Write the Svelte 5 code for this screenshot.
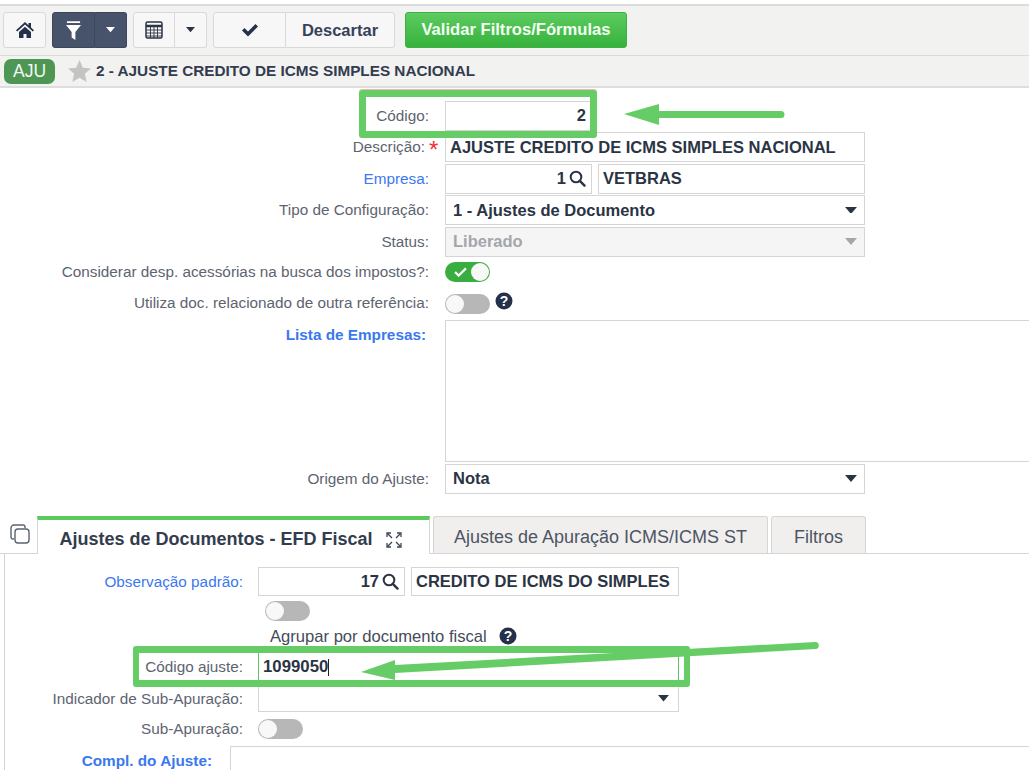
{#snippet search()}
	<svg class="lupa" viewBox="0 0 16 16" width="17" height="17"><circle cx="6.6" cy="6.6" r="5" fill="none" stroke="#2b3444" stroke-width="1.9" /><path d="M10.2 10.2 14.6 14.6" stroke="#2b3444" stroke-width="2.3" stroke-linecap="round" /></svg>
{/snippet}

{#snippet caret(color = '#2b3444', w = 12)}
	<svg class="caret" viewBox="0 0 12 7" width={w} height={w * 0.58}><path d="M0 0h12L6 7z" fill={color} /></svg>
{/snippet}

{#snippet help()}
	<svg class="help" viewBox="0 0 18 18" width="18" height="18"><circle cx="9" cy="9" r="8.5" fill="#25314a" /><text x="9" y="14" text-anchor="middle" class="help-q">?</text></svg>
{/snippet}

<div class="page">
	<header class="toolbar">
		<button class="btn home" aria-label="Início">
			<svg viewBox="0 0 18 16" width="18" height="16"><path d="M9 0 0 8.2l1.2 1.3L9 2.6l7.800 6.900L18 8.200 15 5.500V1h-2.500v2.300zM3 10v6h4.500v-4h3v4H15v-6L9 4.700z" fill="#25314a" /></svg>
		</button>
		<div class="group dark">
			<button class="btn main" aria-label="Filtro">
				<svg viewBox="0 0 16 20" width="15" height="19"><path d="M1 0h14v2H1zM0 4h16l-6 7.500V20l-4-2.500v-6z" fill="#fff" /></svg>
			</button>
			<button class="btn more" aria-label="Mais">{@render caret('#fff', 9)}</button>
		</div>
		<div class="group">
			<button class="btn main table" aria-label="Tabela">
				<svg viewBox="0 0 18 18" width="18" height="18"><rect x="1" y="1" width="16" height="16" rx="1.500" fill="none" stroke="#2b3444" stroke-width="1.500" /><path d="M1 5h16" stroke="#2b3444" stroke-width="2.500" /><path d="M1 9h16M1 12h16M1 15h16M5.500 6v11M9 6v11M12.500 6v11" stroke="#2b3444" stroke-width="0.900" /></svg>
			</button>
			<button class="btn more" aria-label="Mais">{@render caret('#2b3444', 9)}</button>
		</div>
		<div class="group">
			<button class="btn check" aria-label="Confirmar">
				<svg viewBox="0 0 18 14" width="18" height="14"><path d="M1 7.500 3.500 5l3.500 3.500L14.500 1 17 3.500 7 13.500z" fill="#25314a" /></svg>
			</button>
			<button class="btn text">Descartar</button>
		</div>
		<button class="btn validar">Validar Filtros/Fórmulas</button>
	</header>

	<div class="titlebar">
		<span class="badge">AJU</span>
		<svg class="star" viewBox="0 0 24 23" width="23" height="22"><path d="M12 0l3.500 8 8.500.800-6.400 5.700 1.900 8.500L12 18.500 4.500 23l1.900-8.500L0 8.800 8.500 8z" fill="#c4c4c4" /></svg>
		<span class="title">2 - AJUSTE CREDITO DE ICMS SIMPLES NACIONAL</span>
	</div>

	<section class="form">
		<label for="cod">Código:</label>
		<input id="cod" class="wide num" value="2" />

		<label for="desc">Descrição:<span class="req">*</span></label>
		<input id="desc" class="full" value="AJUSTE CREDITO DE ICMS SIMPLES NACIONAL" />

		<span class="lbl link">Empresa:</span>
		<div class="pair">
			<div class="field lookup"><b>1</b>{@render search()}</div>
			<div class="field name">VETBRAS</div>
		</div>

		<span class="lbl">Tipo de Configuração:</span>
		<div class="field select">1 - Ajustes de Documento {@render caret()}</div>

		<span class="lbl">Status:</span>
		<div class="field select disabled">Liberado {@render caret('#a3a6ab')}</div>

		<span class="lbl">Considerar desp. acessórias na busca dos impostos?:</span>
		<div class="toggle-row r1">
			<span class="switch on">
				<svg viewBox="0 0 14 11" width="13" height="10"><path d="M1 5.500 5 9.500 13 1.500" fill="none" stroke="#fff" stroke-width="2.400" /></svg>
				<i></i>
			</span>
		</div>

		<span class="lbl">Utiliza doc. relacionado de outra referência:</span>
		<div class="toggle-row r2">
			<span class="switch"><i></i></span>
			{@render help()}
		</div>

		<span class="lbl link strong top">Lista de Empresas:</span>
		<div class="listbox"></div>

		<span class="lbl">Origem do Ajuste:</span>
		<div class="field select">Nota {@render caret()}</div>
	</section>

	<nav class="tabs">
		<svg class="copy" viewBox="0 0 20 20" width="20" height="20"><rect x="5" y="5" width="14" height="14" rx="3" fill="#fff" stroke="#5b6470" stroke-width="1.400" /><path d="M4 15H3a2 2 0 0 1-2-2V4a3 3 0 0 1 3-3h9a2 2 0 0 1 2 2v1" fill="none" stroke="#5b6470" stroke-width="1.400" /></svg>
		<div class="tab active">
			Ajustes de Documentos - EFD Fiscal
			<svg class="expand" viewBox="0 0 16 16" width="16" height="16"><path d="M1 5V1h4M11 1h4v4M15 11v4h-4M5 15H1v-4M2 2l4 4M14 2l-4 4M14 14l-4-4M2 14l4-4" fill="none" stroke="#3a4454" stroke-width="1.300" /></svg>
		</div>
		<div class="tab second">Ajustes de Apuração ICMS/ICMS ST</div>
		<div class="tab third">Filtros</div>
	</nav>

	<section class="panel">
		<span class="lbl link">Observação padrão:</span>
		<div class="pair sub">
			<div class="field lookup"><b>17</b>{@render search()}</div>
			<div class="field name">CREDITO DE ICMS DO SIMPLES</div>
		</div>

		<span></span>
		<div class="stack">
			<span class="switch"><i></i></span>
			<p class="agrupar">Agrupar por documento fiscal {@render help()}</p>
		</div>

		<label for="aj">Código ajuste:</label>
		<div class="field sub-wide typed"><span id="aj">1099050</span><i class="cursor"></i></div>

		<span class="lbl">Indicador de Sub-Apuração:</span>
		<div class="field select sub-wide low">{@render caret('#2b3444', 11)}</div>

		<span class="lbl">Sub-Apuração:</span>
		<div class="toggle-row r3"><span class="switch"><i></i></span></div>

		<div class="compl">
			<span class="lbl link strong">Compl. do Ajuste:</span>
			<div class="compl-box"></div>
		</div>
	</section>

	<!-- marcações em cima do print -->
	<div class="mark m1"></div>
	<div class="mark m2"></div>
	<svg class="arrows" viewBox="0 0 1029 770" width="1029" height="770">
		<path d="M624 114 659 104V111H781a3.500 3.500 0 0 1 0 7H659V125z" fill="#66cc66" />
		<path d="M361 672 395 660V665L815 642a3.500 3.500 0 0 1 .5 7L395 673V680z" fill="#66cc66" />
	</svg>
</div>

<style>
	:global(body) {
		background: #fff;
		overflow: hidden;
	}

	.page {
		position: relative;
		width: 1029px;
		height: 770px;
		padding-top: 4px;
		box-sizing: border-box;
		overflow: hidden;
		font-family: 'Liberation Sans', Arial, sans-serif;
		color: #2b3444;
	}

	.toolbar {
		display: flex;
		gap: 6px;
		height: 52px;
		padding: 6px 0 0 3px;
		box-sizing: border-box;
		background: #f2f2f1;
		border-top: 2px solid #dcdcdc;
		border-bottom: 1px solid #dadada;
	}

	.btn {
		height: 36px;
		border: 1px solid #d9d9d9;
		border-radius: 3px;
		background: #f7f7f7;
		padding: 0;
		display: flex;
		align-items: center;
		justify-content: center;
		font-family: inherit;
		color: inherit;
	}

	.home {
		width: 43px;
	}

	.group {
		display: flex;
	}

	.group .btn:first-child {
		border-radius: 3px 0 0 3px;
	}

	.group .btn:last-child {
		border-radius: 0 3px 3px 0;
		border-left: 0;
	}

	.dark .btn {
		background: #47536a;
		border-color: #3d4759;
	}

	.main {
		width: 43px;
	}

	.main.table {
		width: 42px;
	}

	.more {
		width: 32px;
	}

	.check {
		width: 73px;
	}

	.text {
		width: 109px;
		font-size: 16.5px;
		font-weight: 700;
		color: #36415a;
	}

	.validar {
		margin-left: 4px;
		width: 222px;
		background: linear-gradient(#5dcb60, #36b23c);
		border-color: #3fb045;
		color: #f3fff3;
		font-size: 16.6px;
		font-weight: 700;
	}

	.titlebar {
		display: flex;
		align-items: center;
		height: 32px;
		box-sizing: border-box;
		padding-left: 4px;
		background: #f2f2f1;
		border-bottom: 2px solid #dedede;
	}

	.badge {
		display: flex;
		align-items: center;
		justify-content: center;
		width: 51px;
		height: 25px;
		border-radius: 7px;
		background: #4d9653;
		color: #f2f8f2;
		font-size: 17.5px;
	}

	.star {
		margin-left: 13px;
	}

	.title {
		margin-left: 5px;
		font-size: 15.3px;
		font-weight: 700;
		color: #333c4e;
	}

	.form {
		display: grid;
		grid-template-columns: 429px 420px;
		column-gap: 16px;
		row-gap: 1.5px;
		grid-template-rows: repeat(5, 30px) 27px 32px 142px 30px;
		padding-top: 12.5px;
	}

	label,
	.lbl {
		display: flex;
		align-items: center;
		justify-content: flex-end;
		font-size: 15.3px;
		color: #5d6470;
		white-space: nowrap;
	}

	.link {
		color: #3b78f0;
	}

	.strong {
		font-weight: 700;
	}

	.top {
		align-items: flex-start;
		margin-right: 3px;
		padding-top: 6px;
	}

	.req {
		color: #e33;
		font-size: 24px;
		width: 0;
		margin-top: 6px;
		padding-left: 4px;
	}

	input,
	.field {
		box-sizing: border-box;
		height: 30px;
		border: 1px solid #d5d5d5;
		background: #fff;
		font-family: inherit;
		font-size: 16.5px;
		font-weight: 700;
		color: #2b3444;
		padding: 0 4px;
		outline: none;
	}

	.field {
		display: flex;
		align-items: center;
	}

	.wide {
		width: 152px;
	}

	.num {
		text-align: right;
		padding-right: 10px;
	}

	.full {
		width: 420px;
	}

	.pair {
		display: flex;
		gap: 6px;
		width: 420px;
	}

	.lookup {
		width: 147px;
		justify-content: flex-end;
		gap: 3px;
		flex: none;
		padding-right: 5px;
	}

	.name {
		flex: 1;
	}

	.lupa {
		flex: none;
	}

	.select {
		justify-content: space-between;
		padding: 0 7px;
	}

	.disabled {
		background: #f5f5f5;
		color: #a3a6ab;
	}

	.toggle-row {
		display: flex;
		align-items: flex-start;
		gap: 5px;
	}

	.r1 {
		padding-top: 4px;
	}

	.r2 {
		padding-top: 7.5px;
	}

	.r3 {
		align-items: center;
	}

	.switch {
		position: relative;
		display: inline-flex;
		align-items: center;
		box-sizing: border-box;
		width: 45px;
		height: 20px;
		border-radius: 10px;
		background: #b7b7b7;
		flex: none;
	}

	.switch i {
		position: absolute;
		left: 1px;
		top: 1px;
		width: 18px;
		height: 18px;
		border-radius: 50%;
		background: #f8f8f8;
	}

	.switch.on {
		background: #39ad3f;
		padding-left: 9px;
	}

	.switch.on i {
		left: auto;
		right: 1px;
	}

	.help {
		margin-top: -2px;
		flex: none;
	}

	.help-q {
		font: 700 14px 'Liberation Sans', sans-serif;
		fill: #fff;
	}

	.listbox {
		width: 590px;
		border: 1px solid #d5d5d5;
		box-sizing: border-box;
	}

	.tabs {
		display: flex;
		align-items: flex-end;
		height: 38px;
		margin-top: 22.5px;
		padding-left: 37px;
		position: relative;
		box-sizing: border-box;
		border-bottom: 1px solid #d5d5d5;
		gap: 3px;
	}

	.copy {
		position: absolute;
		left: 10px;
		top: 8px;
	}

	.tab {
		box-sizing: border-box;
		height: 37px;
		padding-top: 5px;
		display: flex;
		align-items: center;
		justify-content: center;
		font-size: 18px;
		color: #4d5563;
		background: #f0efee;
		border: 1px solid #d5d5d5;
		border-bottom: 0;
		border-radius: 3px 3px 0 0;
	}

	.tab.active {
		width: 393px;
		height: 38px;
		margin-bottom: -1px;
		padding-right: 6px;
		background: #fff;
		border-top: 4px solid #5cc95c;
		border-radius: 0;
		font-weight: 700;
		color: #333c4e;
		gap: 13px;
	}

	.second {
		width: 335px;
	}

	.third {
		width: 95px;
	}

	.panel {
		display: grid;
		grid-template-columns: 238px 421px;
		grid-template-rows: 29px 50px 30px 27px 27px;
		column-gap: 15px;
		row-gap: 3px;
		margin-left: 4px;
		padding-top: 13px;
		height: 216px;
		box-sizing: border-box;
		border-left: 1px solid #d5d5d5;
	}

	.panel .field {
		height: 29px;
	}

	.panel .typed {
		height: 30px;
	}

	.panel .low {
		height: 27px;
	}

	.sub {
		width: 421px;
	}

	.stack {
		display: flex;
		flex-direction: column;
		padding-left: 7px;
		padding-top: 2px;
	}

	.agrupar {
		margin: 6px 0 0 5px;
		font-size: 16.6px;
		line-height: 20px;
		color: #444c59;
		display: flex;
		align-items: center;
		gap: 12px;
		white-space: nowrap;
	}

	.sub-wide {
		width: 421px;
	}

	.typed {
		border-color: #5cc95c;
		font-size: 16.8px;
		font-weight: 700;
		padding-left: 4px;
	}

	.cursor {
		width: 1px;
		height: 17px;
		background: #222;
	}

	.low {
		justify-content: flex-end;
		padding-right: 9px;
	}

	.compl {
		grid-column: 1 / -1;
		display: flex;
		gap: 18px;
		margin-top: 1px;
	}

	.compl .lbl {
		width: 207px;
		flex: none;
		align-items: flex-start;
		padding-top: 6px;
	}

	.compl-box {
		flex: none;
		width: 900px;
		height: 60px;
		border: 1px solid #d5d5d5;
	}

	.mark {
		position: absolute;
		box-sizing: border-box;
		border: 7px solid #66cc66;
		border-radius: 3px;
		pointer-events: none;
	}

	.m1 {
		left: 359px;
		top: 90px;
		width: 238px;
		height: 48px;
		box-shadow: 0 -1px 0 #f3b6b6;
	}

	.m2 {
		left: 133px;
		top: 646px;
		width: 557px;
		height: 41px;
		border-width: 7px 6px;
	}

	.arrows {
		position: absolute;
		left: 0;
		top: 0;
		pointer-events: none;
	}
</style>
